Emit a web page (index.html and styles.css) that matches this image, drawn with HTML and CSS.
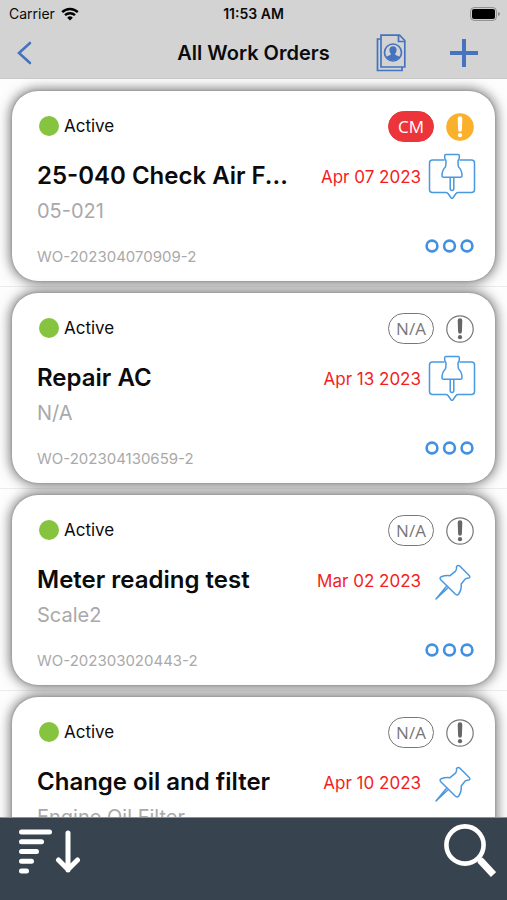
FILE: index.html
```html
<!DOCTYPE html>
<html lang="en">
<head>
<meta charset="utf-8">
<meta name="viewport" content="width=device-width, initial-scale=1">
<title>All Work Orders</title>
<link rel="stylesheet" href="styles.css">
</head>
<body>
<svg class="sprite" aria-hidden="true">
  <symbol id="alert" viewBox="0 0 28 28">
    <circle cx="14" cy="14" r="13.2" stroke-width="1.2"/>
    <path class="alert-mark" d="M11.700 5.500a2.300 2.300 0 0 1 4.600 0l-.4 11.300a1.900 1.900 0 0 1-3.800 0z"/>
    <circle class="alert-mark" cx="14" cy="22.200" r="2.100"/>
  </symbol>
  <symbol id="pin-box" viewBox="0 0 48 48">
    <path d="M16.500 7H4.500a3 3 0 0 0-3 3v26.500a3 3 0 0 0 3 3h13.200q1.400 0 2.300 1l3 4.200q1 1.200 2 0l3-4.200q.9-1 2.300-1h13.200a3 3 0 0 0 3-3V10a3 3 0 0 0-3-3h-12"/>
    <path d="M18 1.500h12q1.300 0 1.300 1.300v2q0 1-.6 1.700-.7 1-.7 2.500 0 3.500.6 5 3.200 2.800 3.400 8.300.1 2-1.500 2h-17q-1.600 0-1.500-2 .2-5.500 3.400-8.300.6-1.500.6-5 0-1.500-.7-2.500-.6-.7-.6-1.700v-2q0-1.300 1.300-1.300z"/>
    <path d="M22.200 24.500v11q0 2 1.800 2t1.800-2v-11"/>
  </symbol>
  <symbol id="pin" viewBox="0 0 48 48">
    <path d="M28.500 9.500q1.500-2 3.500-.3l9.200 9.300q1.500 1.800-.5 2.500-2 0-3.500 1l-4 5q.5 5.500-2.500 10-1.500 1.800-3.500 0L13 23q-2-2 .3-3.300 4-1.500 8.700-1l5.500-4.500q1.500-2 1-4.700z"/>
    <path d="M18.500 29.300 8 42l12-11.200"/>
  </symbol>
  <symbol id="dots" viewBox="0 0 49 14">
    <circle cx="7" cy="7" r="5.400"/><circle cx="24.500" cy="7" r="5.400"/><circle cx="42" cy="7" r="5.400"/>
  </symbol>
</svg>

<header class="top">
  <div class="status">
    <div class="carrier">
      <span>Carrier</span>
      <svg class="wifi" viewBox="0 0 18 14" aria-hidden="true">
        <path d="M1.200 5.200a11.200 11.200 0 0 1 15.600 0M4 8.200a7.200 7.200 0 0 1 10 0"/>
        <path class="solid" d="M9 13.500 6.200 10.700a4 4 0 0 1 5.600 0z"/>
      </svg>
    </div>
    <time>11:53 AM</time>
    <svg class="battery" viewBox="0 0 30 14" aria-hidden="true">
      <rect class="shell" x=".6" y=".6" width="25.800" height="12.800" rx="3.500"/>
      <rect x="2" y="2" width="23" height="10" rx="2"/>
      <path class="cap" d="M28 5q2 .6 2 2t-2 2z"/>
    </svg>
  </div>
  <nav class="bar">
    <button class="back" aria-label="Back"><svg viewBox="0 0 16 24"><path d="M14 2 3 12l11 10"/></svg></button>
    <h1>All Work Orders</h1>
    <div class="tools">
      <button aria-label="Assigned work orders">
        <svg class="contacts" viewBox="0 0 30 38">
          <path d="M5 5H1.500v31.500H26V33"/>
          <path d="M5 1.200h18.500l5.300 5.300V33H5z"/>
          <path d="M22.500 1.200v6.300h6.300"/>
          <circle cx="17" cy="18.500" r="8.500"/>
          <path class="solid" d="M17 12.200a3.600 3.600 0 0 1 3.600 3.800c0 2-1 3-1.600 4 .2 1.400 3.200 1.400 4.600 3.200a8.500 8.500 0 0 1-13.200 0c1.400-1.800 4.400-1.800 4.600-3.200-.6-1-1.600-2-1.600-4a3.600 3.600 0 0 1 3.600-3.800z"/>
        </svg>
      </button>
      <button aria-label="Add work order"><svg class="plus" viewBox="0 0 30 30"><path d="M15 1v28M1 15h28"/></svg></button>
    </div>
  </nav>
</header>

<main class="orders">
  <div class="row">
    <article class="card">
      <div class="info">
        <p class="state">Active</p>
        <h2>25-040 Check Air F...</h2>
        <p class="asset">05-021</p>
        <p class="number">WO-202304070909-2</p>
      </div>
      <div class="side">
        <div class="flags"><span class="type cm">CM</span><svg class="alert high" role="img" aria-label="High priority"><use href="#alert"/></svg></div>
        <div class="due"><time>Apr 07 2023</time><svg class="pin" aria-hidden="true"><use href="#pin-box"/></svg></div>
        <button class="more" aria-label="More"><svg><use href="#dots"/></svg></button>
      </div>
    </article>
  </div>
  <div class="row">
    <article class="card">
      <div class="info">
        <p class="state">Active</p>
        <h2>Repair AC</h2>
        <p class="asset">N/A</p>
        <p class="number">WO-202304130659-2</p>
      </div>
      <div class="side">
        <div class="flags"><span class="type">N/A</span><svg class="alert" role="img" aria-label="No priority"><use href="#alert"/></svg></div>
        <div class="due"><time>Apr 13 2023</time><svg class="pin" aria-hidden="true"><use href="#pin-box"/></svg></div>
        <button class="more" aria-label="More"><svg><use href="#dots"/></svg></button>
      </div>
    </article>
  </div>
  <div class="row">
    <article class="card">
      <div class="info">
        <p class="state">Active</p>
        <h2>Meter reading test</h2>
        <p class="asset">Scale2</p>
        <p class="number">WO-202303020443-2</p>
      </div>
      <div class="side">
        <div class="flags"><span class="type">N/A</span><svg class="alert" role="img" aria-label="No priority"><use href="#alert"/></svg></div>
        <div class="due"><time>Mar 02 2023</time><svg class="pin" aria-hidden="true"><use href="#pin"/></svg></div>
        <button class="more" aria-label="More"><svg><use href="#dots"/></svg></button>
      </div>
    </article>
  </div>
  <div class="row">
    <article class="card">
      <div class="info">
        <p class="state">Active</p>
        <h2>Change oil and filter</h2>
        <p class="asset">Engine Oil Filter</p>
      </div>
      <div class="side">
        <div class="flags"><span class="type">N/A</span><svg class="alert" role="img" aria-label="No priority"><use href="#alert"/></svg></div>
        <div class="due"><time>Apr 10 2023</time><svg class="pin" aria-hidden="true"><use href="#pin"/></svg></div>
        <button class="more" aria-label="More"><svg><use href="#dots"/></svg></button>
      </div>
    </article>
  </div>
</main>

<footer class="bottom">
  <button aria-label="Sort">
    <svg class="sort" viewBox="0 0 62 46">
      <path d="M2.500 3h28M2.500 12.800h20M2.500 22.500h15M2.500 32.300h10M2.500 42h5"/>
      <path d="M49 4v37M39.500 31 49 40.500l9.500-9.500"/>
    </svg>
  </button>
  <button aria-label="Search">
    <svg class="search" viewBox="0 0 52 54">
      <circle cx="21" cy="21" r="18.600"/>
      <path class="neck" d="m34 34 5 5"/>
      <path class="handle" d="m36 36 13.500 14.500"/>
    </svg>
  </button>
</footer>
</body>
</html>
```
FILE: styles.css
```css
* {
  box-sizing: border-box;
}

body {
  margin: 0;
  height: 100vh;
  display: flex;
  flex-direction: column;
  background: #fdfdfd;
  color: #0b0b0b;
  font-family: Inter, "Liberation Sans", sans-serif;
}

h1, h2, p {
  margin: 0;
}

button {
  display: flex;
  padding: 0;
  border: 0;
  background: none;
  cursor: pointer;
}

svg {
  display: block;
  fill: none;
}

.sprite {
  position: absolute;
  width: 0;
  height: 0;
}

/* Header */
.top {
  flex: none;
  background: #d3d3d3;
  border-bottom: 1px solid #c8c8c8;
}

.status {
  display: grid;
  grid-template-columns: 1fr auto 1fr;
  align-items: center;
  height: 27px;
  padding: 0 7px;
  font-size: 14px;
}

.status time {
  font-weight: 600;
}

.carrier {
  display: flex;
  align-items: center;
  gap: 6px;
  padding-left: 2px;
}

.wifi {
  width: 18px;
  height: 14px;
  stroke: #000;
  stroke-width: 2.4;
}

.wifi .solid {
  fill: #000;
  stroke: none;
}

.battery {
  justify-self: end;
  width: 30px;
  height: 14px;
  fill: #000;
}

.battery .shell {
  fill: none;
  stroke: #8c8c8c;
}

.battery .cap {
  fill: #8c8c8c;
}

.bar {
  display: grid;
  grid-template-columns: 1fr auto 1fr;
  align-items: center;
  height: 51px;
  padding: 0 16px;
}

.bar svg {
  stroke: #4673bf;
}

.bar h1 {
  font-size: 20px;
  line-height: 24px;
  font-weight: 600;
}

.back svg {
  width: 16px;
  height: 24px;
  stroke-width: 2.6;
  stroke-linecap: round;
}

.tools {
  display: flex;
  justify-content: flex-end;
  align-items: center;
  gap: 43px;
  padding-right: 12px;
}

.contacts {
  width: 30px;
  height: 38px;
  stroke-width: 1.7;
}

.contacts .solid {
  fill: #4673bf;
  stroke: none;
}

.plus {
  width: 30px;
  height: 30px;
  stroke-width: 4;
}

/* Work order list */
.orders {
  flex: 1;
  min-height: 0;
  overflow: hidden;
  padding-top: 6px;
}

.row {
  padding: 6px 12px 5px;
  border-bottom: 1px solid #ececec;
}

.card {
  display: grid;
  grid-template-columns: minmax(0, 1fr) 184px;
  height: 190px;
  padding: 20px 20px 0 25px;
  border-radius: 26px;
  background: #fff;
  box-shadow: 0 0 2px #888, 0 0 12px 2px #777;
}

.state {
  display: flex;
  align-items: center;
  gap: 5px;
  padding-left: 2px;
  font-size: 17px;
  line-height: 30px;
}

.state::before {
  content: "";
  width: 20px;
  height: 20px;
  border-radius: 50%;
  background: #86c440;
}

.info h2 {
  margin-top: 19px;
  overflow: hidden;
  font-size: 24px;
  line-height: 32px;
  font-weight: 600;
  text-overflow: ellipsis;
  white-space: nowrap;
}

.asset {
  margin-top: 5px;
  color: #a9a9a9;
  font-size: 20px;
  line-height: 28px;
}

.number {
  margin-top: 22px;
  color: #a9a9a9;
  font-size: 15px;
  line-height: 20px;
}

.side {
  display: flex;
  flex-direction: column;
  align-items: flex-end;
}

.flags {
  display: flex;
  align-items: center;
  gap: 12px;
  padding-right: 1px;
}

.type {
  width: 46px;
  height: 31px;
  border: 1px solid #777;
  border-radius: 16px;
  color: #777;
  font: 17px/29px "Open Sans", "Noto Sans", sans-serif;
  text-align: center;
}

.cm {
  border-color: #ec353b;
  background: #ec353b;
  color: #fff;
}

.alert {
  width: 28px;
  height: 28px;
  color: #666;
  stroke: #777;
}

.alert-mark {
  fill: currentColor;
  stroke: none;
}

.high {
  fill: #fbb02b;
  stroke: #fbb02b;
  color: #fff;
}

.due {
  display: flex;
  align-items: center;
  gap: 7px;
  margin-top: 11px;
  color: #f51d1d;
  font-size: 17px;
}

.pin {
  width: 48px;
  height: 48px;
  margin-right: -1px;
  stroke: #4a98df;
  stroke-width: 1.5;
  stroke-linejoin: round;
}

.more {
  margin: 38px 1px 0 0;
}

.more svg {
  width: 49px;
  height: 14px;
  stroke: #4291e0;
  stroke-width: 2.6;
}

/* Bottom bar */
.bottom {
  flex: none;
  display: flex;
  justify-content: space-between;
  align-items: flex-start;
  height: 83px;
  padding: 6px 11px 0 19px;
  border-top: 1px solid #89919a;
  background: #37444f;
}

.bottom svg {
  stroke: #fff;
}

.sort {
  width: 62px;
  height: 46px;
  margin-top: 5px;
  stroke-width: 5;
  stroke-linecap: round;
  stroke-linejoin: round;
}

.search {
  width: 52px;
  height: 54px;
  stroke-width: 4.6;
}

.search .handle {
  stroke-width: 7;
}
```
